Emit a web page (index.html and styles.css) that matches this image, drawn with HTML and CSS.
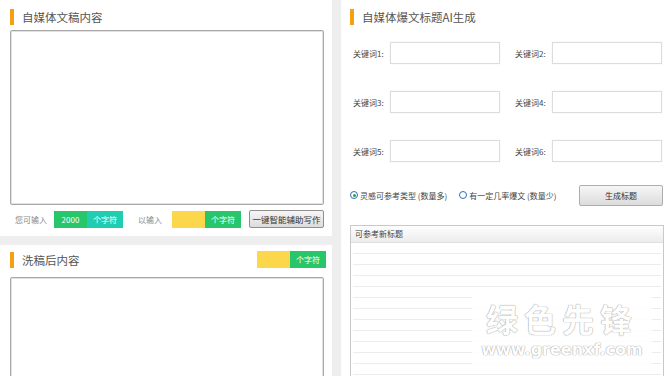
FILE: index.html
```html
<!DOCTYPE html>
<html lang="zh-CN">
<head>
<meta charset="UTF-8" />
<meta name="viewport" content="width=device-width, initial-scale=1" />
<title>自媒体文章工具</title>
<link rel="stylesheet" href="styles.css">
</head>
<body>

<div class="left-col">
  <div class="panel panel-source">
    <div class="title">自媒体文稿内容</div>
    <textarea class="text-box source-box"></textarea>
    <div class="count-row">
      <span class="count-label">您可输入</span>
      <span class="counter"><span class="num green">2000</span><span class="unit teal">个字符</span></span>
      <span class="count-label spaced">以输入</span>
      <span class="counter"><span class="num yellow"></span><span class="unit green">个字符</span></span>
      <button class="btn assist-btn">一键智能辅助写作</button>
    </div>
  </div>

  <div class="panel panel-result">
    <div class="title-row">
      <div class="title">洗稿后内容</div>
      <span class="counter"><span class="num yellow"></span><span class="unit green">个字符</span></span>
    </div>
    <textarea class="text-box result-box"></textarea>
  </div>
</div>

<div class="panel right-col">
  <div class="title">自媒体爆文标题AI生成</div>

  <div class="keywords">
    <label class="kw"><span>关键词1:</span><input type="text"></label>
    <label class="kw"><span>关键词2:</span><input type="text"></label>
    <label class="kw"><span>关键词3:</span><input type="text"></label>
    <label class="kw"><span>关键词4:</span><input type="text"></label>
    <label class="kw"><span>关键词5:</span><input type="text"></label>
    <label class="kw"><span>关键词6:</span><input type="text"></label>
  </div>

  <div class="options">
    <label class="radio"><span class="dot checked"></span>灵感可参考类型 (数量多)</label>
    <label class="radio"><span class="dot"></span>有一定几率爆文 (数量少)</label>
    <button class="btn gen-btn">生成标题</button>
  </div>

  <div class="list-box">
    <div class="list-head">可参考新标题</div>
    <div class="list-body"></div>
    <div class="watermark">
      <div class="wm-big">绿色先锋</div>
      <div class="wm-url">www.greenxf.com</div>
    </div>
  </div>
</div>

</body>
</html>
```

FILE: styles.css
```css
body {
  margin: 0;
  background: #eeeeee;
  font-family: "Noto Sans CJK SC", "Noto Sans", sans-serif;
  display: flex;
  gap: 9px;
  height: 376px;
  overflow: hidden;
}
.panel {
  background: #fff;
  box-sizing: border-box;
}
.left-col {
  width: 332px;
  display: flex;
  flex-direction: column;
  gap: 9px;
}
.panel-source {
  flex: none;
  height: 236px;
  padding: 9px 8px 0 10px;
}
.panel-result {
  flex: 1;
  min-height: 0;
  overflow: hidden;
  padding: 6px 6px 0 10px;
}
.title {
  border-left: 4px solid #f5a00e;
  padding-left: 8px;
  font-size: 11.5px;
  line-height: 16px;
  height: 16px;
  color: #555;
}
.text-box {
  display: block;
  box-sizing: border-box;
  width: 314px;
  border: 1px solid #a8a8a8;
  box-shadow: inset 0 0 0 1px #e2e2e2;
  border-radius: 2px;
  resize: none;
  background: #fff;
  margin: 0;
}
.source-box {
  margin-top: 5px;
  height: 175px;
}
.count-row {
  display: flex;
  align-items: center;
  margin-top: 5px;
  height: 18px;
}
.count-label {
  font-size: 8px;
  color: #888;
  padding-left: 5px;
  width: 39px;
}
.count-label.spaced {
  margin-left: 10px;
  width: 34px;
}
.counter {
  display: flex;
  height: 17px;
  font-size: 8px;
  color: #fff;
  line-height: 17px;
}
.counter .num {
  width: 33px;
  text-align: center;
}
.counter .unit {
  width: 36px;
  text-align: center;
}
.green { background: #27c66a; }
.teal { background: #1fcdb0; }
.yellow { background: #fcd64b; }
.btn {
  font-family: inherit;
  font-size: 8.5px;
  color: #333;
  border: 1px solid #8f8f8f;
  border-radius: 2px;
  background: linear-gradient(#f6f6f6, #dcdcdc);
  padding: 0;
}
.assist-btn {
  margin-left: auto;
  width: 75px;
  height: 18px;
}
.title-row {
  display: flex;
  justify-content: space-between;
  align-items: center;
  height: 17px;
}
.result-box {
  margin-top: 9px;
  height: 110px;
}
.right-col {
  flex: 1;
  padding: 9px 3px 0 9px;
  position: relative;
}
.keywords {
  display: grid;
  grid-template-columns: 150px 150px;
  column-gap: 12px;
  row-gap: 27px;
  margin-top: 17px;
}
.kw {
  display: flex;
  align-items: center;
  font-size: 8px;
  color: #444;
  padding-left: 3px;
}
.kw span {
  width: 38px;
}
.kw input {
  box-sizing: border-box;
  width: 110px;
  height: 22px;
  border: 1px solid #dcdcdc;
  box-shadow: 0 0 1px #e8e8e8;
  margin: 0;
}
.options {
  display: flex;
  align-items: center;
  margin-top: 23px;
  height: 20px;
  font-size: 8px;
  color: #444;
}
.radio {
  display: flex;
  align-items: center;
  margin-right: 12px;
}
.dot {
  width: 8px;
  height: 8px;
  border: 1px solid #2c6fb5;
  border-radius: 50%;
  margin-right: 2px;
  box-sizing: border-box;
  position: relative;
}
.dot.checked::after {
  content: "";
  position: absolute;
  left: 1.5px;
  top: 1.5px;
  width: 3px;
  height: 3px;
  border-radius: 50%;
  background: #2aa04a;
}
.gen-btn {
  margin-left: auto;
  margin-right: 1px;
  width: 84px;
  height: 21px;
  border-color: #adadad;
  font-size: 8px;
}
.list-box {
  margin-top: 20px;
  width: 314px;
  height: 160px;
  border: 1px solid #c9c9c9;
  box-sizing: border-box;
  position: relative;
}
.list-head {
  height: 16px;
  line-height: 16px;
  font-size: 8px;
  color: #444;
  padding-left: 4px;
  background: linear-gradient(#fefefe, #ececec);
  border-bottom: 1px solid #e0e0e0;
}
.list-body {
  height: 140px;
  margin: 0 2px;
  background: repeating-linear-gradient(#fff 0, #fff 10px, #ececec 10px, #ececec 11px);
}
.watermark {
  position: absolute;
  left: 121px;
  top: 70px;
  width: 180px;
  height: 70px;
  background: rgba(255, 255, 255, 0.9);
  text-align: center;
  color: #fff;
  text-shadow: 0 0 1px #9a9a9a, 0 0 1px #9a9a9a;
  overflow: hidden;
}
.wm-big {
  font-size: 32px;
  line-height: 44px;
  letter-spacing: 6px;
  font-weight: bold;
}
.wm-url {
  font-family: "DejaVu Sans", sans-serif;
  font-size: 16px;
  line-height: 20px;
  font-weight: bold;
}
```
